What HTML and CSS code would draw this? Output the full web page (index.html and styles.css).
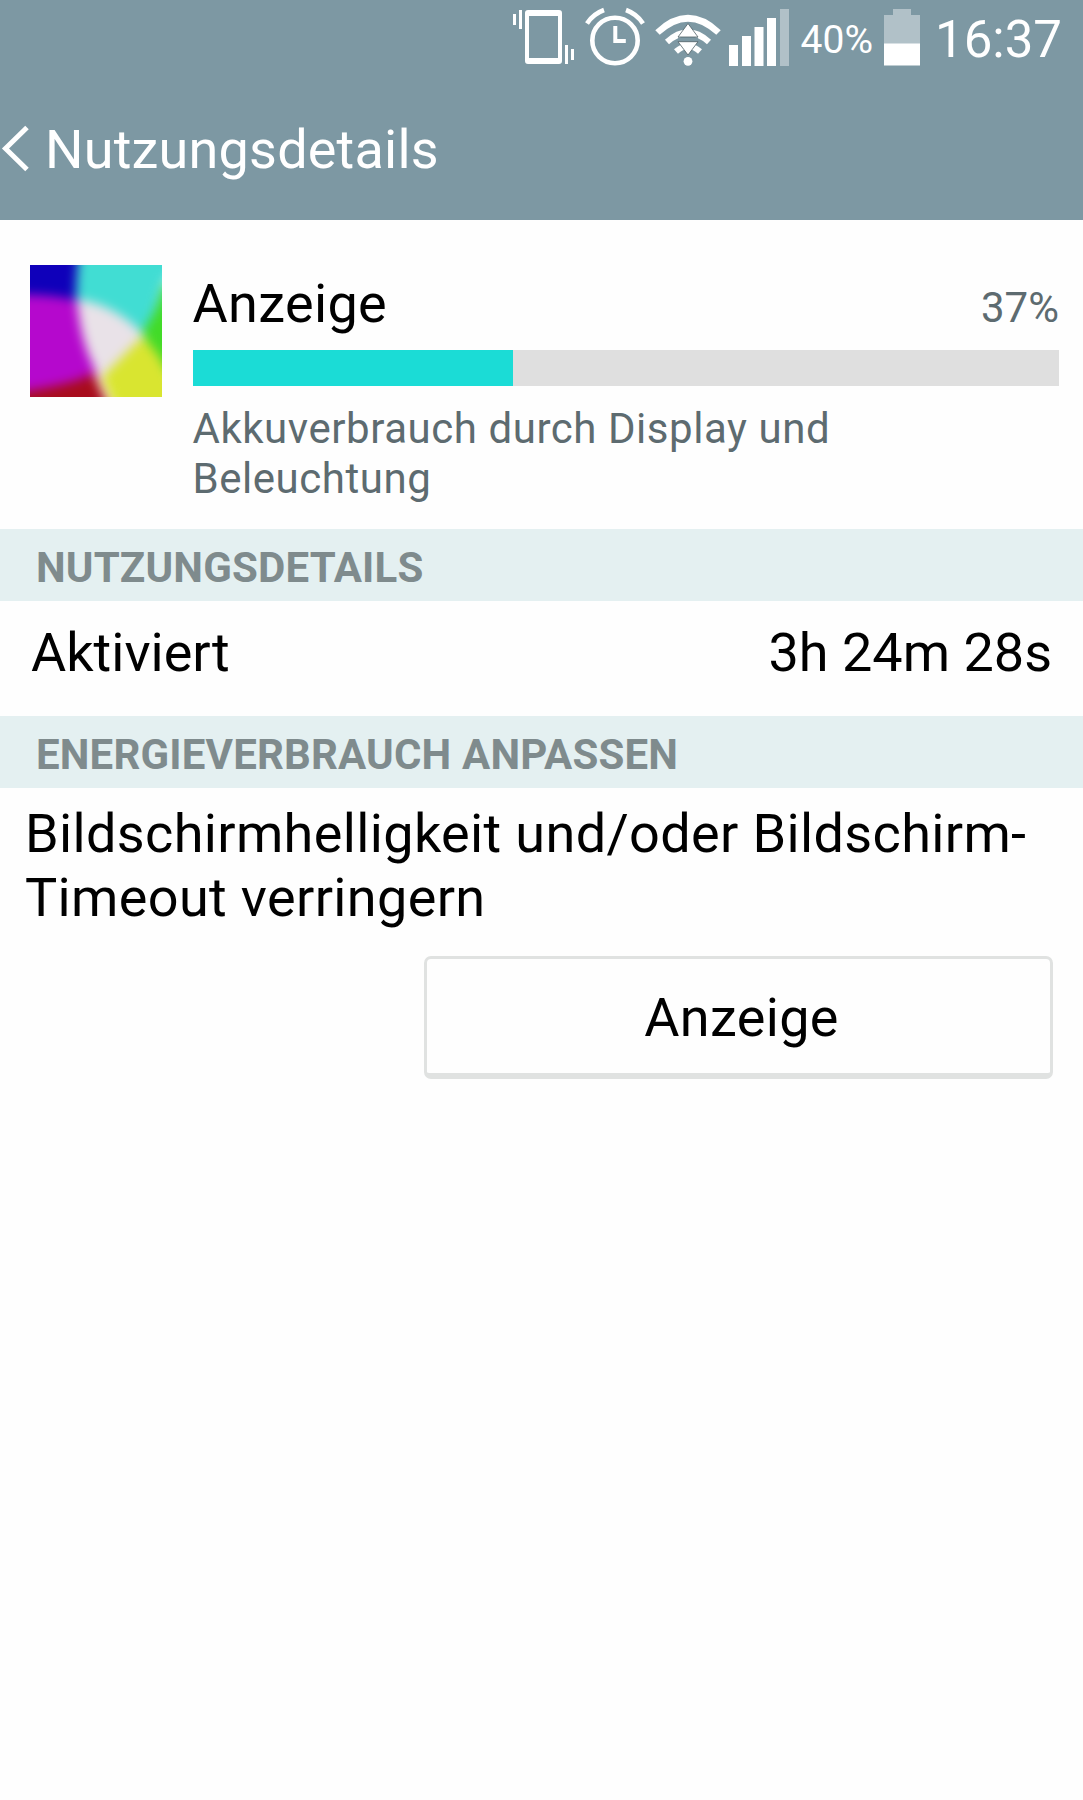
FILE: index.html
```
<!DOCTYPE html>
<html lang="de">
<head>
  <meta charset="UTF-8">
  <meta name="viewport" content="width=device-width, initial-scale=1.0">

  <title>Nutzungsdetails</title>

  <link rel="stylesheet" href="styles.css">
</head>
<body>

  <header class="header">
    <div class="status-bar">
      <!-- vibrate -->
      <svg class="status-bar__icon status-bar__icon--vibrate" width="62" height="80" viewBox="0 0 62 80" fill="#fff">
        <path d="M0 14h3v11h-3zM6 10h3v19h-3zM52 45h3v19h-3zM58 49h3v11h-3z"/>
        <path fill-rule="evenodd" d="M15 10h31q3 0 3 3v48q0 3-3 3h-31q-3 0-3-3v-48q0-3 3-3zM16 16v42h29v-42z"/>
      </svg>
      <!-- alarm -->
      <svg class="status-bar__icon status-bar__icon--alarm" width="60" height="80" viewBox="0 0 60 80" fill="none" stroke="#fff">
        <circle cx="30" cy="40.5" r="22.7" stroke-width="4.6"/>
        <path stroke-width="4" d="M30.3 26v15h10.5"/>
        <path stroke-width="4.6" d="M2 23.5Q8 14 19 10M41 10Q52 14 58 23.5"/>
      </svg>
      <!-- wifi -->
      <svg class="status-bar__icon status-bar__icon--wifi" width="66" height="80" viewBox="0 0 66 80" fill="none" stroke="#fff">
        <path stroke-width="6.5" d="M2.5 32.5Q33 4 63.5 32.5"/>
        <path stroke-width="6" d="M12 42Q33 23 54 42"/>
        <path stroke-width="6" d="M21 51.5Q33 41 45 51.5"/>
        <circle cx="33" cy="61.3" r="4.4" fill="#fff" stroke="none"/>
        <path fill="#7d98a3" stroke="none" d="M23 37.5h20v4h-20z"/>
        <path fill="#fff" stroke="#4f5f66" stroke-width="0.8" d="M33 23.5L43 37H23zM33 55L43 41.7H23z"/>
      </svg>
      <!-- signal -->
      <svg class="status-bar__icon" width="61" height="80" viewBox="0 0 61 80" fill="#fff">
        <path d="M0 45h9v21h-9zM13 36h9v30h-9zM25.5 27h9v39h-9zM38 18h9v48h-9z"/>
        <path fill="#b1c1c8" d="M51 9h9v57h-9z"/>
      </svg>
      <span class="status-bar__percent">40%</span>
      <!-- battery -->
      <svg class="status-bar__icon" width="36" height="80" viewBox="0 0 36 80">
        <path fill="#b1c1c8" d="M9 9h18v6h9v29h-36v-29h9z"/>
        <path fill="#fff" d="M0 43.5h36v22h-36z"/>
      </svg>
      <span class="status-bar__time">16:37</span>
    </div>

    <div class="title-bar">
      <svg class="title-bar__back" width="30" height="50" viewBox="0 0 30 50" fill="none" stroke="#fff" stroke-width="5">
        <path d="M27 2.500L5.500 23.500L27 44.500"/>
      </svg>
      <h1 class="title-bar__title">Nutzungsdetails</h1>
    </div>
  </header>

  <main>
    <section class="usage">
      <svg class="usage__icon" width="132" height="132" viewBox="0 0 132 132">
        <defs>
          <filter id="soft" x="-20%" y="-20%" width="140%" height="140%" color-interpolation-filters="sRGB">
            <feGaussianBlur stdDeviation="5.5"/>
          </filter>
        </defs>
        <g filter="url(#soft)">
          <path fill="#0f00ba" d="M-40-40H60V60H-40z"/>
          <path fill="#b508cd" d="M-40 29Q20 28 50 36L62 90L66 112Q40 125-10 128L-40 128z"/>
          <path fill="#a80c1c" d="M-40 131Q40 122 64 108L95 180H-40z"/>
          <path fill="#41ddd3" d="M53-40Q46 0 46 38L112 68Q126 50 132 20L180-40z"/>
          <path fill="#42db28" d="M111 68Q126 50 134 20L180 20V110H140z"/>
          <path fill="#d9e530" d="M111 72Q125 82 136 104L180 180H100L68 104z"/>
          <path fill="#e9e2e8" d="M47 34Q86 40 114 70Q90 94 70 114Q50 80 47 34z"/>
        </g>
      </svg>
      <div class="usage__body">
        <div class="usage__heading">
          <span class="usage__name">Anzeige</span>
          <span class="usage__percent">37%</span>
        </div>
        <div class="usage__bar">
          <div class="usage__bar-fill" style="width: 37%"></div>
        </div>
        <p class="usage__description">Akkuverbrauch durch Display und Beleuchtung</p>
      </div>
    </section>

    <h2 class="section-title">NUTZUNGSDETAILS</h2>
    <div class="detail">
      <span>Aktiviert</span>
      <span>3h 24m 28s</span>
    </div>

    <h2 class="section-title">ENERGIEVERBRAUCH ANPASSEN</h2>
    <div class="adjust">
      <p class="adjust__text">Bildschirmhelligkeit und/oder Bildschirm-Timeout verringern</p>
      <button class="adjust__button" type="button">Anzeige</button>
    </div>
  </main>

</body>
</html>
```
FILE: styles.css
```
:root {
  --clr-header: #7d98a3;
  --clr-section: #e4f0f1;
  --clr-section-text: #7f8b8d;
  --clr-muted: #5d6b70;
  --clr-accent: #1bdcd6;

  font-size: 54px;
  font-family: Roboto, sans-serif;
}

* {
  box-sizing: border-box;
}

body {
  min-height: 100vh;
  margin: 0;
  background: #fefefe;
  color: #000;
}

h1,
h2,
p {
  margin: 0;
  font-weight: 400;
}

svg {
  display: block;
  flex: none;
}

.header {
  height: 220px;
  background: var(--clr-header);
  color: #fff;
}

.status-bar {
  height: 80px;
  display: flex;
  justify-content: flex-end;
  align-items: center;
  gap: 11px;
  padding-right: 21px;
  line-height: 80px;
}

.status-bar__icon--vibrate,
.status-bar__icon--alarm {
  margin-right: -1px;
}

.status-bar__icon--wifi {
  margin-right: -3px;
}

.status-bar__percent {
  font-size: 39px;
}

.status-bar__time {
  font-size: 51px;
  margin-left: 4px;
}

.title-bar {
  height: 140px;
  display: flex;
  align-items: center;
}

.title-bar__title {
  font-size: 54px;
  line-height: 64px;
  letter-spacing: 0.2px;
  margin-left: 15px;
}

.usage {
  height: 309px;
  display: flex;
  gap: 30.5px;
  padding: 45px 24px 0 30px;
}

.usage__body {
  flex: 1;
  padding-top: 7px;
}

.usage__heading {
  height: 64px;
  display: flex;
  justify-content: space-between;
  align-items: baseline;
  line-height: 64px;
}

.usage__name {
  letter-spacing: 0.35px;
}

.usage__percent {
  font-size: 42px;
}

.usage__percent,
.usage__description {
  color: var(--clr-muted);
}

.usage__bar {
  height: 36px;
  margin-top: 14px;
  background: #dfdfdf;
}

.usage__bar-fill {
  height: 100%;
  background: var(--clr-accent);
}

.usage__description {
  margin-top: 18px;
  max-width: 700px;
  font-size: 42px;
  line-height: 50px;
  letter-spacing: 0.55px;
}

.section-title {
  height: 72px;
  padding: 5px 36px 0;
  background: var(--clr-section);
  color: var(--clr-section-text);
  font-size: 42px;
  font-weight: 700;
  line-height: 67px;
  letter-spacing: 0.17px;
}

.detail {
  height: 115px;
  display: flex;
  justify-content: space-between;
  padding: 0 31px;
  line-height: 103px;
}

.adjust {
  display: flex;
  flex-direction: column;
  padding: 14px 30px 0 25px;
}

.adjust__text {
  line-height: 64px;
  letter-spacing: 0.36px;
}

.adjust__button {
  align-self: flex-end;
  width: 629px;
  height: 123px;
  margin-top: 26px;
  padding: 3px 0 0 6px;
  background: #fefefe;
  border: 3px solid #e0e2e1;
  border-bottom-width: 6px;
  border-radius: 7px;
  color: #000;
  font: inherit;
  letter-spacing: 0.35px;
}
```
